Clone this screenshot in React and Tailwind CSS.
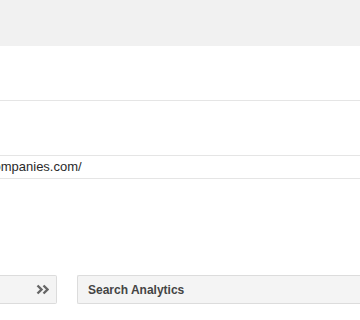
export default function App() {
    return (
        <div className="w-[360px] h-[320px] overflow-hidden bg-white font-['Liberation_Sans',Arial,sans-serif]">
            <div className="h-[46px] bg-[#f1f1f1]" />
            <div className="h-[54px]" />
            <div className="border-t border-[#e5e5e5] h-[55px]" />
            <div className="border-t border-b border-[#e5e5e5] h-[24px] flex items-center">
                <span className="ml-[-13px] text-[13px] text-[#2a2a2a] whitespace-nowrap">companies.com/</span>
            </div>
            <div className="h-[96px]" />
            <div className="flex items-start">
                <div className="w-[57px] h-[29px] bg-[#f4f4f4] border border-l-0 border-[#dcdcdc] rounded-r-[2px] flex items-center justify-end pr-[7px]">
                    {/* double chevron */}
                    <svg width="13" height="11" viewBox="0 0 13 11" fill="none" stroke="#666" strokeWidth="2.4">
                        <path d="M1.5 1.5 L5.5 5.5 L1.5 9.5" />
                        <path d="M7.5 1.5 L11.5 5.5 L7.5 9.5" />
                    </svg>
                </div>
                <div className="ml-[20px] flex-1 h-[29px] bg-[#f4f4f4] border border-r-0 border-[#dcdcdc] rounded-l-[2px] flex items-center pl-[10px]">
                    <span className="text-[12px] font-bold text-[#444]">Search Analytics</span>
                </div>
            </div>
        </div>
    );
}
